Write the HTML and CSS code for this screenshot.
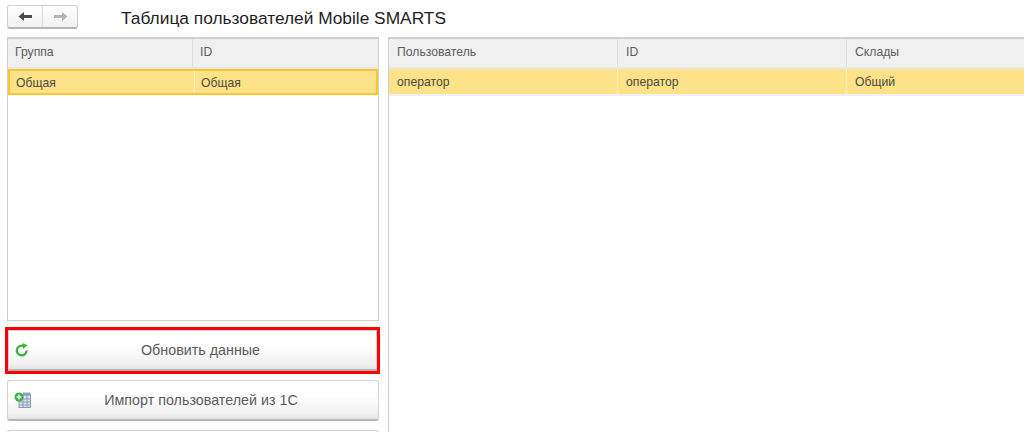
FILE: index.html
```html
<!DOCTYPE html>
<html lang="ru">
<head>
<meta charset="utf-8">
<title>Таблица пользователей Mobile SMARTS</title>
<link rel="stylesheet" href="styles.css">
</head>
<body>
<header class="top">
  <div class="nav">
    <button class="nav-btn nav-back" aria-label="Назад">
      <svg width="15" height="11" viewBox="0 0 15 11"><path d="M0.5 5.5 L6 1 V4 H14 V7 H6 V10 Z" fill="#4a4a4a"/></svg>
    </button>
    <button class="nav-btn" aria-label="Вперёд">
      <svg width="15" height="11" viewBox="0 0 15 11"><path d="M14.5 5.5 L9 1 V4 H1 V7 H9 V10 Z" fill="#b4b4b4"/></svg>
    </button>
  </div>
  <h1 class="title">Таблица пользователей Mobile SMARTS</h1>
</header>
<main class="content">
  <section class="left">
    <div class="table table-left">
      <div class="row head cols-left">
        <div class="cell">Группа</div>
        <div class="cell">ID</div>
      </div>
      <div class="row sel cols-left">
        <div class="cell">Общая</div>
        <div class="cell">Общая</div>
      </div>
    </div>
    <div class="highlight">
      <button class="action">
        <svg class="icon" width="14" height="14" viewBox="0 0 14 14"><path d="M11.6 7.6 A4.9 4.9 0 1 1 8.2 2.9" fill="none" stroke="#3fb044" stroke-width="2.3"/><path d="M7.4 0 L12.6 2.2 L8 6 Z" fill="#3fb044"/></svg>
        <span>Обновить данные</span>
      </button>
    </div>
    <button class="action action-import">
      <svg class="icon icon-wide" width="17" height="16" viewBox="0 0 17 16">
        <rect x="5" y="3" width="11.5" height="12.5" fill="#dfe6ee" stroke="#8a9bb0" stroke-width="1"/>
        <path d="M5 7 H16.5 M5 10 H16.5 M5 13 H16.5 M9 3 V15.5 M13 3 V15.5" stroke="#8a9bb0" stroke-width="1" fill="none"/>
        <rect x="9" y="0.5" width="7.5" height="3" fill="#8fa5bd"/>
        <circle cx="5" cy="5" r="4.5" fill="#3fae4a"/>
        <path d="M5 2.5 V7.5 M2.5 5 H7.5" stroke="#e8f7e8" stroke-width="1.6"/>
      </svg>
      <span>Импорт пользователей из 1С</span>
    </button>
    <div class="next-btn"></div>
  </section>
  <section class="table table-right">
    <div class="row head cols-right">
      <div class="cell">Пользователь</div>
      <div class="cell">ID</div>
      <div class="cell">Склады</div>
    </div>
    <div class="row sel-plain cols-right">
      <div class="cell">оператор</div>
      <div class="cell">оператор</div>
      <div class="cell">Общий</div>
    </div>
  </section>
</main>
</body>
</html>
```

FILE: styles.css
```css
* { box-sizing: border-box; }
html, body { margin: 0; padding: 0; height: 432px; overflow: hidden; background: #fff; }
body { font-family: "Liberation Sans", Arial, sans-serif; color: #4b4b4b; width: 1024px; }

.top { display: flex; align-items: flex-start; height: 37px; padding: 5px 0 0 7px; }
.nav {
  display: flex; width: 71px; height: 24px;
  border: 1px solid #cfcfcf; border-bottom: 2px solid #b5b5b5; border-radius: 3px;
  background: linear-gradient(#ffffff, #f1f1f1);
}
.nav-btn {
  flex: 1; border: 0; padding: 0; background: none;
  display: flex; align-items: center; justify-content: center;
}
.nav-back { border-right: 1px solid #dcdcdc; flex: 0 0 35px; }
.title { margin: 0 0 0 43px; font-size: 17.33px; font-weight: 400; color: #1e1e1e; line-height: 26px; }

.content { display: flex; padding-left: 7px; gap: 9px; }
.left { width: 372px; flex: none; }

.table { border: 1px solid #cfcfcf; border-top: 2px solid #cfcfcf; background: #fff; }
.table-left { height: 284px; }
.table-right { flex: 1; height: 395px; border-right: 0; border-bottom: 0; }

.row { display: grid; font-size: 12.2px; }
.cols-left { grid-template-columns: 185px 1fr; }
.cols-right { grid-template-columns: 229px 229px 1fr; }
.cell { padding-left: 7px; overflow: hidden; white-space: nowrap; }
.cols-right .cell { padding-left: 8px; }

.head { height: 30px; line-height: 27px; background: #f0f0f0; border-bottom: 2px solid #e6e6e6; color: #5c5c5c; }
.head .cell { border-right: 1px solid #dedede; }
.head .cell:last-child { border-right: 0; }

.sel { height: 26px; line-height: 24px; background: #fde28a; border: 2px solid #fbc52d; color: #4a4a3a; }
.sel .cell { padding-left: 6px; border-right: 1px solid #fff3c4; }
.sel .cell:last-child { border-right: 0; padding-left: 6px; }

.sel-plain { height: 27px; line-height: 27px; background: #fde28a; border-bottom: 2px solid #f0f0f0; color: #4a4a3a; }
.sel-plain .cell { border-right: 1px solid #fff3c4; }
.sel-plain .cell:last-child { border-right: 0; }

.highlight { margin: 6px 0 0 -2px; width: 375px; height: 47px; border: 3px solid #ff0000; }
.action {
  position: relative; display: flex; align-items: center; justify-content: center;
  width: 100%; padding: 0 0 0 16px; font: 14.3px "Liberation Sans", Arial, sans-serif; color: #5a5a5a;
  background: linear-gradient(#ffffff 40%, #f1f1f1 85%, #e6e6e6);
  border: 1px solid #d2d2d2; border-bottom: 2px solid #b5b5b5; border-radius: 3px;
}
.highlight .action { height: 41px; border-radius: 0; }
.action-import { height: 41px; margin-top: 6px; }
.icon { position: absolute; left: 6px; top: 12px; }
.icon-wide { left: 6px; top: 11px; }
.next-btn { height: 10px; margin-top: 9px; border: 1px solid #d2d2d2; border-bottom: 0; border-radius: 3px 3px 0 0; }
```
